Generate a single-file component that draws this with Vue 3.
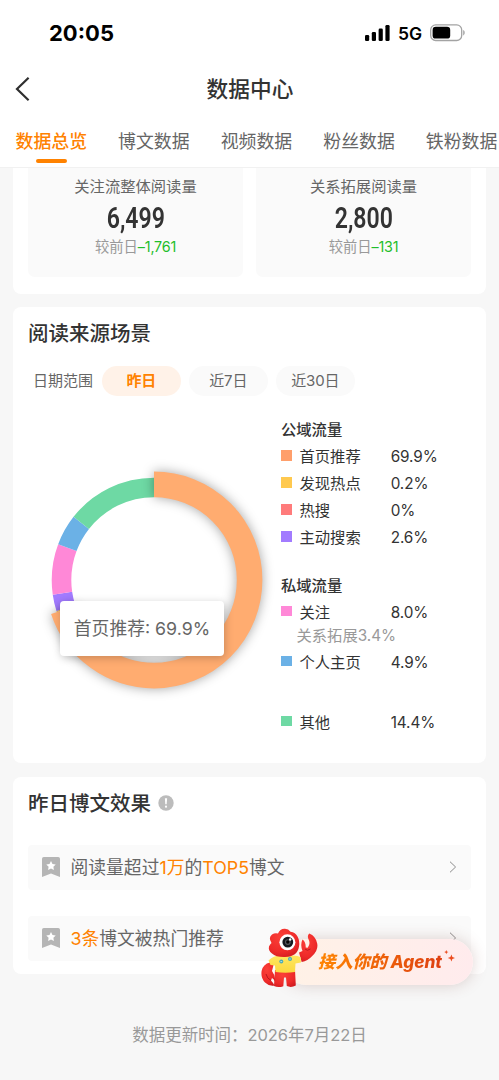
<template>
  <div class="page">
    <header class="header">
      <div class="status-bar">
        <span class="clock">20:05</span>
        <div class="status-icons">
          <svg class="signal" viewBox="0 0 25 16" width="25" height="16">
            <rect x="0" y="10" width="4.2" height="6" rx="1.3" />
            <rect x="6.8" y="7" width="4.2" height="9" rx="1.3" />
            <rect x="13.6" y="3.6" width="4.2" height="12.4" rx="1.3" />
            <rect x="20.4" y="0" width="4.2" height="16" rx="1.3" />
          </svg>
          <span class="network">5G</span>
          <svg class="battery" viewBox="0 0 36 18" width="36" height="18">
            <rect x="0.7" y="0.9" width="31" height="15.6" rx="5" fill="none" stroke="#a3a3a3" stroke-width="1.3" />
            <rect x="2.6" y="2.8" width="17.6" height="11.8" rx="3.2" fill="#000" />
            <path d="M33.2 6v5.4c2-.9 2-4.5 0-5.4z" fill="#a3a3a3" />
          </svg>
        </div>
      </div>
      <div class="nav-bar">
        <svg class="back" viewBox="0 0 16 26" width="16" height="26">
          <path d="M13.6 1.8L2 13l11.6 11.2" fill="none" stroke="#2f2f2f" stroke-width="2.2" />
        </svg>
        <h1 class="nav-title">数据中心</h1>
      </div>
      <nav class="tabs">
        <span
          v-for="(tab, index) in tabs"
          :key="tab"
          class="tab"
          :class="{ active: activeTab === index }"
          @click="activeTab = index"
        >{{ tab }}</span>
      </nav>
    </header>

    <main class="content">
      <section class="card stats-card">
        <div v-for="stat in stats" :key="stat.label" class="stat">
          <span class="stat-label">{{ stat.label }}</span>
          <span class="stat-value">{{ stat.value }}</span>
          <span class="stat-diff">较前日<b>{{ stat.diff }}</b></span>
        </div>
      </section>

      <section class="card source-card">
        <h2 class="card-title">阅读来源场景</h2>
        <div class="ranges">
          <span class="range-label">日期范围</span>
          <span
            v-for="(range, index) in ranges"
            :key="range"
            class="range"
            :class="{ active: activeRange === index }"
            @click="activeRange = index"
          >{{ range }}</span>
        </div>
        <div class="source-body">
          <div class="chart">
            <svg viewBox="-125 -125 250 250" width="250" height="250">
              <g transform="rotate(-90)" fill="none">
                <circle
                  v-for="arc in arcs.slice(1)"
                  :key="arc.name"
                  r="92.5"
                  pathLength="100"
                  stroke-width="19.6"
                  :stroke="arc.color"
                  :stroke-dasharray="arc.dash"
                  :stroke-dashoffset="-arc.start"
                />
              </g>
              <g class="selected-arc">
                <circle
                  transform="rotate(-90)"
                  r="95.6"
                  fill="none"
                  pathLength="100"
                  stroke-width="25.6"
                  :stroke="arcs[0].color"
                  :stroke-dasharray="arcs[0].dash"
                />
              </g>
            </svg>
            <div class="tooltip">首页推荐: 69.9%</div>
          </div>
          <div class="legend">
            <div v-for="(group, index) in groups" :key="index" class="legend-group">
              <h3 v-if="group.title" class="legend-title">{{ group.title }}</h3>
              <template v-for="item in group.items" :key="item.name">
                <div class="legend-row">
                  <i class="swatch" :style="{ background: item.color }"></i>
                  <span class="legend-name">{{ item.name }}</span>
                  <span class="legend-value">{{ item.text }}</span>
                </div>
                <div v-if="item.note" class="legend-note">{{ item.note }}</div>
              </template>
            </div>
          </div>
        </div>
      </section>

      <section class="card effect-card">
        <h2 class="card-title">
          昨日博文效果
          <svg class="info" viewBox="0 0 16 16" width="16" height="16">
            <circle cx="8" cy="8" r="7.7" fill="#bcbcbc" />
            <path d="M6.9 3.2h2.2L8.7 9.3H7.3z" fill="#fff" />
            <circle cx="8" cy="11.7" r="1.1" fill="#fff" />
          </svg>
        </h2>
        <div v-for="(row, index) in rows" :key="index" class="effect-row">
          <svg class="bookmark" viewBox="0 0 18 20" width="18" height="20">
            <path d="M1.8 0h14.4Q18 0 18 1.8V20l-9-3.6L0 20V1.8Q0 0 1.8 0z" fill="#b5b5b5" />
            <path d="M9 4l1.5 2.9 3.2.5-2.3 2.3.5 3.2L9 11.400l-2.900 1.500.5-3.200-2.300-2.300 3.200-.5z" fill="#fff" />
          </svg>
          <span class="effect-text">
            <span v-for="part in row" :key="part.text" :class="{ hot: part.hot }">{{ part.text }}</span>
          </span>
          <svg class="arrow" viewBox="0 0 8 12" width="8" height="12">
            <path d="M1 .7L6.6 6 1 11.3" fill="none" stroke="#8c8c8c" stroke-width="1" />
          </svg>
        </div>
      </section>

      <p class="update-time">数据更新时间：2026年7月22日</p>
    </main>

    <!-- Botón flotante del agente -->
    <div class="agent">
      <svg class="mascot" viewBox="0 0 57 60" width="57" height="60">
        <defs>
          <radialGradient id="red" cx="0.4" cy="0.3" r="0.8">
            <stop offset="0" stop-color="#fb4038" />
            <stop offset="0.65" stop-color="#ee2a29" />
            <stop offset="1" stop-color="#cf1a1f" />
          </radialGradient>
          <linearGradient id="shirt" x1="0" y1="0" x2="0" y2="1">
            <stop offset="0" stop-color="#ffe75f" />
            <stop offset="1" stop-color="#fbd83f" />
          </linearGradient>
        </defs>
        <!-- piernas -->
        <path d="M14 42h20l.8 15.500q-4.500 2.500-9 .6L25 49.500h-2l-.7 8.700q-5 1.800-9.300-.2z" fill="url(#red)" />
        <!-- pinza izquierda -->
        <path d="M9 34.500Q2 36 .6 43q-1 7 3.400 11.500 4 4 9.500 3-1.500-3-3.500-5l1-2.500q2 1 3 3.500.8-5.500-3-10.500l1.500-6z" fill="url(#red)" />
        <path d="M5 46q1 4.500 5 6.500" fill="none" stroke="#b9141b" stroke-width="1" />
        <!-- pinza derecha -->
        <path d="M38 24.500l3.500-1.500q-2.500-6.500 0-11.500 3.500 2.500 3.200 8l2 .2q3.300-4 .5-9.200-1-3 1-5 6.500 2.500 8 10 1.300 7-5 12.500-4.500 5-10.500 6z" fill="url(#red)" />
        <path d="M44 21q2 2.500 5.500 0" fill="none" stroke="#bd171c" stroke-width="1" />
        <!-- camiseta -->
        <path d="M7.500 32.500Q12 28 18 27.500h14q5 0 7.500 1.500l.5 5.500-5.500 1-.5 8.500q-9.500 1.500-19.500 0L14 37.500l-4.500-.5z" fill="url(#shirt)" />
        <!-- cabeza -->
        <path d="M11 25.500Q7 22.500 8 18.500q1-2.500 2.500-3.500Q7 9.500 11 6.500q3-2 6-1Q19 .5 24 .8q3.500.2 5.500 3 5 .7 7 4.700 2.500 4.500 1.500 10Q36.500 28.500 24 29q-9 .3-13-3.500z" fill="url(#red)" />
        <circle cx="26.400" cy="14.300" r="8" fill="#fff" />
        <circle cx="26.800" cy="14.100" r="5.400" fill="#15191f" />
        <circle cx="26.800" cy="14.100" r="2.900" fill="#54575c" />
        <circle cx="26.800" cy="14" r="1.700" fill="#050505" />
        <circle cx="29.200" cy="11.500" r="1.200" fill="#fff" />
        <circle cx="20.300" cy="33.600" r="2" fill="#4aa9b5" />
        <circle cx="29" cy="31" r="2" fill="#4aa9b5" />
        <path d="M19.400 33.600h1.800M28.100 31h1.800" stroke="#c4eef0" stroke-width=".8" />
      </svg>
      <span class="agent-text">接入你的 Agent</span>
      <svg class="sparkles" viewBox="0 0 11 14" width="11" height="14">
        <path d="M7.4 4.500l1 2.500 2.600 1-2.600 1-1 2.600-1-2.600-2.600-1 2.600-1z" fill="#eb4b1d" />
        <path d="M2.300 0l.6 1.500 1.500.6-1.500.6-.6 1.500-.6-1.500-1.500-.6 1.500-.6z" fill="#eb4b1d" />
      </svg>
    </div>
  </div>
</template>

<script setup>
import { computed, ref } from 'vue';

const tabs = ['数据总览', '博文数据', '视频数据', '粉丝数据', '铁粉数据'];
const activeTab = ref(0);
const ranges = ['昨日', '近7日', '近30日'];
const activeRange = ref(0);

const stats = [
  { label: '关注流整体阅读量', value: '6,499', diff: '–1,761' },
  { label: '关系拓展阅读量', value: '2,800', diff: '–131' }
];

const groups = [
  {
    title: '公域流量',
    items: [
      { name: '首页推荐', value: 69.9, text: '69.9%', color: '#ff9f6b' },
      { name: '发现热点', value: 0.2, text: '0.2%', color: '#ffc94f' },
      { name: '热搜', value: 0, text: '0%', color: '#ff7b7b' },
      { name: '主动搜索', value: 2.6, text: '2.6%', color: '#a27bff' }
    ]
  },
  {
    title: '私域流量',
    items: [
      { name: '关注', value: 8, text: '8.0%', color: '#ff88d7', note: '关系拓展3.4%' },
      { name: '个人主页', value: 4.9, text: '4.9%', color: '#6bb1e6' }
    ]
  },
  {
    title: '',
    items: [{ name: '其他', value: 14.4, text: '14.4%', color: '#6ed9a4' }]
  }
];

// segmentos del anillo, en porcentaje acumulado
const arcs = computed(() => {
  let start = 0;
  return groups.flatMap((group) => group.items).filter((item) => item.value > 0).map((item, index) => {
    const arc = {
      name: item.name,
      color: index === 0 ? '#ffac70' : item.color,
      dash: `${item.value} ${100 - item.value}`,
      start
    };
    start += item.value;
    return arc;
  });
});

const rows = [
  [
    { text: '阅读量超过' },
    { text: '1万', hot: true },
    { text: '的' },
    { text: 'TOP5', hot: true },
    { text: '博文' }
  ],
  [{ text: '3条', hot: true }, { text: '博文被热门推荐' }]
];
</script>

<style>
body {
  margin: 0;
  background: #f7f7f7;
}
</style>

<style scoped>
.page {
  position: relative;
  height: 1080px;
  overflow: hidden;
  background: #f7f7f7;
  font-family: Inter, "Noto Sans CJK SC", sans-serif;
  color: #333;
}

svg {
  display: block;
  flex: none;
}

/* Cabecera */
.header {
  height: 167px;
  background: #fff;
  border-bottom: 1px solid #f1f1f1;
}

.status-bar {
  display: flex;
  justify-content: space-between;
  align-items: center;
  height: 66px;
  padding: 0 33px 0 49px;
  box-sizing: border-box;
  color: #000;
}

.clock {
  font-size: 22px;
  font-weight: 700;
}

.status-icons {
  display: flex;
  align-items: center;
}

.network {
  margin: 0 8px 0 8px;
  font-size: 17.5px;
  font-weight: 600;
}

.nav-bar {
  display: flex;
  align-items: center;
  height: 46px;
  padding: 0 15px;
}

.nav-title {
  flex: 1;
  margin: 0 15px 0 0;
  text-align: center;
  font-size: 21.7px;
  font-weight: 500;
  line-height: 47px;
}

.tabs {
  display: flex;
  gap: 31px;
  height: 55px;
  padding-left: 15.5px;
  overflow: hidden;
}

.tab {
  flex: none;
  display: flex;
  flex-direction: column;
  align-items: center;
  font-size: 17.9px;
  line-height: 60px;
  height: 55px;
  color: #666;
}

.tab.active {
  color: #ff8200;
  font-weight: 500;
}

.tab.active::after {
  content: "";
  width: 31px;
  height: 4px;
  margin-top: -13px;
  border-radius: 2px;
  background: #ff8200;
}

/* Tarjetas */
.content {
  padding: 0 13px;
}

.card {
  box-sizing: border-box;
  margin-bottom: 13.5px;
  padding: 0 15px;
  border-radius: 8px;
  background: #fff;
}

.card-title {
  display: flex;
  align-items: center;
  gap: 6.5px;
  margin: 0;
  font-size: 20.5px;
  font-weight: 500;
  line-height: 31px;
}

.stats-card {
  display: flex;
  gap: 13px;
  height: 125.5px;
  border-radius: 0 0 8px 8px;
}

.stat {
  flex: 1;
  display: flex;
  flex-direction: column;
  align-items: center;
  height: 109px;
  border-radius: 0 0 7px 7px;
  background: #fafafa;
}

.stat-label {
  margin-top: 7px;
  font-size: 15.3px;
  line-height: 24px;
  color: #666;
}

.stat-value {
  font-family: Roboto, sans-serif;
  font-size: 30px;
  font-weight: 600;
  line-height: 37px;
  transform: scaleX(0.77);
}

.stat-diff {
  margin-top: 1px;
  font-size: 14.3px;
  line-height: 20px;
  color: #999;
}

.stat-diff b {
  font-weight: 400;
  letter-spacing: -0.2px;
  color: #1fbe2b;
}

/* Origen de lectura */
.source-card {
  height: 456px;
  padding-top: 11px;
}

.ranges {
  display: flex;
  align-items: center;
  gap: 8.5px;
  margin-top: 17px;
  padding-left: 5px;
  font-size: 15px;
  line-height: 30px;
  color: #666;
}

.range-label {
  width: 60.5px;
  white-space: nowrap;
}

.range {
  width: 78.5px;
  border-radius: 15px;
  background: #fafafa;
  text-align: center;
  letter-spacing: -0.2px;
}

.range.active {
  background: #fff2e8;
  color: #ff8200;
  font-weight: 700;
}

.source-body {
  display: flex;
}

.chart {
  position: relative;
  flex: none;
  width: 250px;
  height: 250px;
  margin: 58.5px 2.5px 0 0.5px;
}

.selected-arc {
  filter: drop-shadow(0 0 6px rgba(0, 0, 0, 0.36));
}

.tooltip {
  position: absolute;
  left: 31.5px;
  top: 146.5px;
  width: 164px;
  height: 55px;
  border-radius: 4px;
  background: #fff;
  box-shadow: 1px 2px 9px rgba(0, 0, 0, 0.22);
  font-size: 17.8px;
  line-height: 55px;
  text-align: center;
  color: #666;
}

.legend {
  padding-top: 20px;
  font-size: 15.3px;
}

.legend-group {
  margin-bottom: 20.5px;
}

.legend-group:nth-child(2) {
  margin-bottom: 33px;
}

.legend-title {
  margin: 0;
  font-size: 15.3px;
  font-weight: 500;
  line-height: 27px;
}

.legend-row {
  display: flex;
  align-items: center;
  height: 27px;
  line-height: 27px;
}

.swatch {
  width: 10.5px;
  height: 10.5px;
  margin: 0 8px 2px 0;
}

.legend-name {
  width: 91.2px;
}

.legend-value {
  letter-spacing: -0.1px;
}

.legend-note {
  padding-left: 15.5px;
  line-height: 23px;
  margin-top: -2px;
  margin-bottom: 2px;
  color: #999;
}

/* Efecto de las publicaciones */
.effect-card {
  height: 197.5px;
  padding-top: 11px;
  margin-bottom: 0;
}

.effect-row {
  display: flex;
  align-items: center;
  height: 45px;
  margin-top: 26.5px;
  padding: 0 14px;
  border-radius: 4px;
  background: #fafafa;
}

.card-title + .effect-row {
  margin-top: 26px;
}

.effect-text {
  flex: 1;
  margin-left: 10.5px;
  font-size: 17.8px;
  line-height: 45px;
  color: #666;
}

.bookmark,
.arrow {
  margin-bottom: 1px;
}

.hot {
  color: #ff8200;
}

.update-time {
  margin: 49px 0 0;
  text-align: center;
  font-size: 16.5px;
  line-height: 24px;
  letter-spacing: -0.05px;
  color: #999;
}

.agent {
  position: absolute;
  left: 283px;
  top: 939px;
  display: flex;
  align-items: center;
  box-sizing: border-box;
  width: 190px;
  height: 46px;
  padding-left: 35px;
  border-radius: 23px;
  background: linear-gradient(90deg, #fff2e6, #ffebed);
  box-shadow: 0 0 16px rgba(110, 50, 40, 0.22);
}

.mascot {
  position: absolute;
  left: -22px;
  top: -11px;
}

.agent-text {
  padding-right: 2px;
  font-size: 17.2px;
  line-height: 44px;
  font-weight: 800;
  font-style: italic;
  white-space: nowrap;
  background: linear-gradient(90deg, #ff8500, #dd3e12);
  -webkit-background-clip: text;
  background-clip: text;
  color: transparent;
}

.sparkles {
  margin-top: -11px;
}
</style>
